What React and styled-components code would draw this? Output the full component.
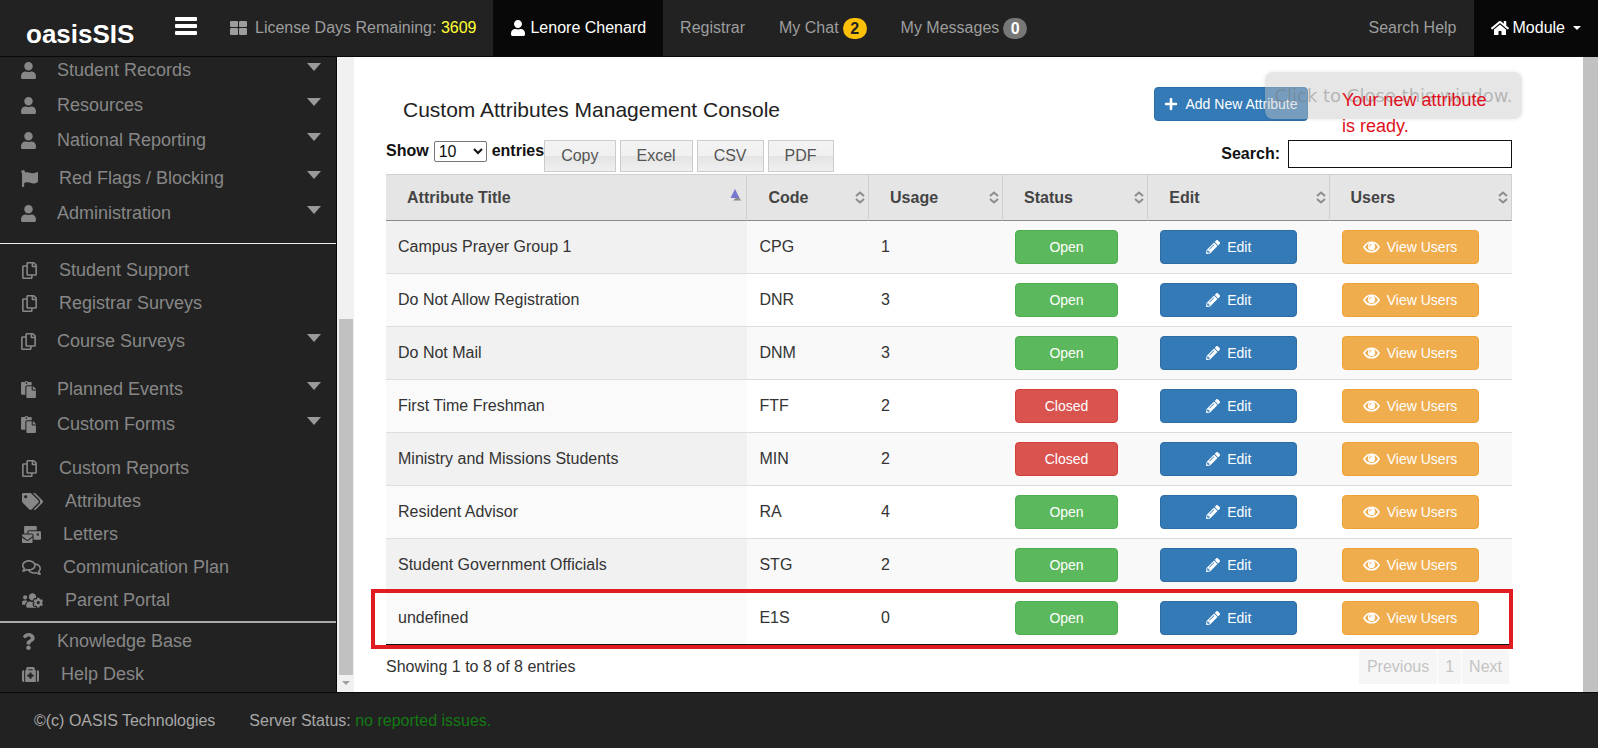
import React, { useState } from "react";
import styled, { createGlobalStyle, css } from "styled-components";
import {
  FaUser,
  FaFlag,
  FaRegCopy,
  FaPaste,
  FaTags,
  FaMailBulk,
  FaRegComments,
  FaUsersCog,
  FaQuestion,
  FaMedkit,
  FaHome,
  FaPlus,
  FaPencilAlt,
} from "react-icons/fa";

// every section is closed by a rule, groups inside it are spaced apart
const menuSections = [
  [
    {
      space: 0,
      items: [
        { label: "Student Records", icon: FaUser, width: 15, open: true },
        { label: "Resources", icon: FaUser, width: 15, open: true },
        { label: "National Reporting", icon: FaUser, width: 15, open: true },
      ],
    },
    {
      space: 3,
      items: [
        { label: "Red Flags / Blocking", icon: FaFlag, width: 17, open: true },
        { label: "Administration", icon: FaUser, width: 15, open: true },
      ],
    },
  ],
  [
    {
      space: 10,
      items: [
        { label: "Student Support", icon: FaRegCopy, width: 15 },
        { label: "Registrar Surveys", icon: FaRegCopy, width: 15 },
      ],
    },
    {
      space: 4,
      items: [{ label: "Course Surveys", icon: FaRegCopy, width: 15, open: true }],
    },
    {
      space: 13,
      items: [
        { label: "Planned Events", icon: FaPaste, width: 15, open: true },
        { label: "Custom Forms", icon: FaPaste, width: 15, open: true },
      ],
    },
    {
      space: 10,
      items: [
        { label: "Custom Reports", icon: FaRegCopy, width: 15 },
        { label: "Attributes", icon: FaTags, width: 21 },
        { label: "Letters", icon: FaMailBulk, width: 19 },
        { label: "Communication Plan", icon: FaRegComments, width: 19 },
        { label: "Parent Portal", icon: FaUsersCog, width: 21 },
      ],
    },
  ],
  [
    {
      space: 2,
      items: [
        { label: "Knowledge Base", icon: FaQuestion, width: 13 },
        { label: "Help Desk", icon: FaMedkit, width: 17 },
      ],
    },
  ],
];

const columns = [
  { title: "Attribute Title", width: "32.1%", sorted: true },
  { title: "Code", width: "10.8%" },
  { title: "Usage", width: "11.9%" },
  { title: "Status", width: "12.9%" },
  { title: "Edit", width: "16.1%" },
  { title: "Users", width: "16.2%" },
];

const attributes = [
  { title: "Campus Prayer Group 1", code: "CPG", usage: 1, status: "Open" },
  { title: "Do Not Allow Registration", code: "DNR", usage: 3, status: "Open" },
  { title: "Do Not Mail", code: "DNM", usage: 3, status: "Open" },
  { title: "First Time Freshman", code: "FTF", usage: 2, status: "Closed" },
  { title: "Ministry and Missions Students", code: "MIN", usage: 2, status: "Closed" },
  { title: "Resident Advisor", code: "RA", usage: 4, status: "Open" },
  { title: "Student Government Officials", code: "STG", usage: 2, status: "Open" },
  { title: "undefined", code: "E1S", usage: 0, status: "Open" },
];

const SortIcon = () => (
  <svg width="10" height="13" viewBox="0 0 10 13" fill="none" stroke="#8c8c8c" strokeWidth="2">
    <path d="M1 5 L5 1.5 L9 5" />
    <path d="M1 8 L5 11.5 L9 8" />
  </svg>
);

const SortedIcon = () => (
  <svg width="11" height="12" viewBox="0 0 11 12">
    <path d="M3 11.5 H11 L8 7 Z" fill="#8a8a8a" />
    <path d="M5 0 L9.5 9 H0.5 Z" fill="#7777cc" />
  </svg>
);

const EyeIcon = () => (
  <svg width="17" height="12" viewBox="0 0 17 12">
    <path
      d="M1 6 C4.5 -0.4 12.5 -0.4 16 6 C12.5 12.4 4.5 12.4 1 6 Z"
      fill="none"
      stroke="#fff"
      strokeWidth="1.6"
    />
    <circle cx="8.5" cy="5.4" r="3.6" fill="#fff" />
    <path d="M6.6 5.4 A1.9 1.9 0 0 1 8.5 3.5" fill="none" stroke="#f0ad4e" strokeWidth="0.9" />
  </svg>
);

const Sidebar = () => (
  <Menu>
    {menuSections.map((groups, index) => (
      <MenuSection key={index} $index={index}>
        {groups.map((group) => (
          <MenuGroup key={group.items[0].label} $space={group.space}>
            {group.items.map(({ label, icon: Icon, width, open }) => (
              <li key={label}>
                {open ? (
                  <MenuToggle type="button">
                    <IconBox $width={width}>
                      <Icon />
                    </IconBox>
                    {label}
                    <Arrow />
                  </MenuToggle>
                ) : (
                  <MenuLink href="#">
                    <IconBox $width={width}>
                      <Icon />
                    </IconBox>
                    {label}
                  </MenuLink>
                )}
              </li>
            ))}
          </MenuGroup>
        ))}
      </MenuSection>
    ))}
  </Menu>
);

const AttributeTable = () => (
  <TableBox>
    <Table>
      <colgroup>
        {columns.map((col) => (
          <Col key={col.title} $width={col.width} />
        ))}
      </colgroup>
      <thead>
        <tr>
          {columns.map((col) => (
            <Th key={col.title}>
              <ThInner $sorted={col.sorted}>
                {col.title}
                {col.sorted ? <SortedIcon /> : <SortIcon />}
              </ThInner>
            </Th>
          ))}
        </tr>
      </thead>
      <tbody>
        {attributes.map((row) => (
          <Row key={row.code}>
            <td>{row.title}</td>
            <td>{row.code}</td>
            <td>{row.usage}</td>
            <td>
              <Button $color={row.status === "Open" ? "green" : "red"} $width="103px">
                {row.status}
              </Button>
            </td>
            <td>
              <Button $color="blue" $width="137px">
                <FaPencilAlt />
                Edit
              </Button>
            </td>
            <td>
              <Button $color="orange" $width="137px">
                <EyeIcon />
                View Users
              </Button>
            </td>
          </Row>
        ))}
      </tbody>
    </Table>
    <Highlight />
  </TableBox>
);

const App = () => {
  const [search, setSearch] = useState("");
  const [size, setSize] = useState("10");

  return (
    <Page>
      <GlobalStyle />
      <Header>
        <Brand href="#">oasisSIS</Brand>
        <Burger type="button" aria-label="Toggle menu">
          <svg width="22" height="18" viewBox="0 0 22 18" fill="#fff">
            <rect width="22" height="4" rx="1" />
            <rect y="7" width="22" height="4" rx="1" />
            <rect y="14" width="22" height="4" rx="1" />
          </svg>
        </Burger>
        <NavItem href="#">
          <svg width="17" height="14" viewBox="0 0 17 14" fill="#9d9d9d">
            <rect width="8" height="6" rx="1" />
            <rect x="9" width="8" height="6" rx="1" />
            <rect y="7" width="8" height="7" rx="1" />
            <rect x="9" y="7" width="8" height="7" rx="1" />
          </svg>
          <License>
            License Days Remaining: <Days>3609</Days>
          </License>
        </NavItem>
        <NavItem href="#" $active>
          <FaUser size={16} />
          Lenore Chenard
        </NavItem>
        <NavItem href="#">Registrar</NavItem>
        <NavItem href="#">
          My Chat <Badge $warning>2</Badge>
        </NavItem>
        <NavItem href="#">
          My Messages <Badge>0</Badge>
        </NavItem>
        <Spacer />
        <NavItem href="#">Search Help</NavItem>
        <NavItem href="#" $active>
          <FaHome size={18} />
          Module
          <Caret />
        </NavItem>
      </Header>

      <Body>
        <Sidebar />
        <ScrollTrack>
          <ScrollThumb />
          <ScrollArrow />
        </ScrollTrack>
        <Main>
          <TitleRow>
            <Title>Custom Attributes Management Console</Title>
            <Button $color="blue" $width="154px">
              <FaPlus />
              Add New Attribute
            </Button>
            <Message>Your new attribute is ready.</Message>
          </TitleRow>
          <CloseHint>Click to Close this window.</CloseHint>

          <Toolbar>
            <LengthLabel>
              Show
              <select value={size} onChange={(e) => setSize(e.target.value)}>
                <option>10</option>
                <option>25</option>
                <option>50</option>
              </select>
              entries
            </LengthLabel>
            <ExportButtons>
              {["Copy", "Excel", "CSV", "PDF"].map((name) => (
                <ExportButton key={name} type="button">
                  {name}
                </ExportButton>
              ))}
            </ExportButtons>
            <Spacer />
            <SearchLabel>
              Search:
              <input type="text" value={search} onChange={(e) => setSearch(e.target.value)} />
            </SearchLabel>
          </Toolbar>

          <AttributeTable />

          <TableFooter>
            <span>Showing 1 to 8 of 8 entries</span>
            <Pager>
              <button type="button">Previous</button>
              <button type="button">1</button>
              <button type="button">Next</button>
            </Pager>
          </TableFooter>
        </Main>
        <PageScroll />
      </Body>

      <Footer>
        <span>©(c) OASIS Technologies</span>
        <span>
          Server Status: <Status>no reported issues.</Status>
        </span>
      </Footer>
    </Page>
  );
};

const GlobalStyle = createGlobalStyle`
  * {
    box-sizing: border-box;
  }
  body {
    margin: 0;
    background: #fff;
    font-family: "Liberation Sans", Arial, sans-serif;
    font-size: 16px;
    color: #333;
  }
  button, input, select {
    font: inherit;
  }
  a {
    text-decoration: none;
  }
`;

const Page = styled.div`
  display: flex;
  flex-direction: column;
  min-height: 100vh;
  padding-right: 2px;
`;

const Spacer = styled.div`
  flex: 1;
`;

/* top bar */
const Header = styled.header`
  display: flex;
  height: 57px;
  background: #222;
  border-bottom: 1px solid #080808;
`;

const Brand = styled.a`
  width: 149px;
  padding: 14px 0 0 26px;
  font-size: 26px;
  font-weight: bold;
  line-height: 40px;
  color: #fff;
`;

const Burger = styled.button`
  display: flex;
  align-items: flex-start;
  width: 64px;
  padding: 17px 0 0 26px;
  border: 0;
  background: none;
`;

const NavItem = styled.a`
  display: flex;
  align-items: center;
  gap: 4px;
  padding: 0 17px;
  color: ${(props) => (props.$active ? "#fff" : "#9d9d9d")};
  background: ${(props) => (props.$active ? "#080808" : "transparent")};
  white-space: nowrap;
`;

const License = styled.span`
  padding-left: 4px;
`;

const Days = styled.span`
  color: #ffff33;
`;

const Badge = styled.span`
  min-width: 24px;
  height: 21px;
  border-radius: 11px;
  font-weight: bold;
  line-height: 21px;
  text-align: center;
  color: ${(props) => (props.$warning ? "#222" : "#fff")};
  background: ${(props) => (props.$warning ? "#ffc107" : "#777")};
`;

const Caret = styled.span`
  margin-left: 4px;
  border: 4px solid transparent;
  border-top-color: #fff;
  border-bottom: 0;
`;

/* side menu */
const Body = styled.div`
  display: flex;
  flex: 1;
`;

const Menu = styled.nav`
  flex: none;
  width: 337px;
  overflow: hidden;
  background: #222;
  border-right: 1px solid #080808;
`;

const MenuSection = styled.div`
  ${(props) =>
    props.$index === 0 &&
    css`
      margin-top: -4px;
      padding-bottom: 12px;
      border-bottom: 1px solid #eee;
    `}
  ${(props) =>
    props.$index === 1 &&
    css`
      padding-bottom: 4px;
      border-bottom: 2px solid #aaa;
    `}
`;

const MenuGroup = styled.ul`
  margin: 0;
  padding: ${(props) => props.$space}px 0 0;
  list-style: none;
`;

const menuItem = css`
  display: flex;
  align-items: center;
  font-size: 18px;
  color: #878787;
`;

const MenuToggle = styled.button`
  ${menuItem}
  gap: 21px;
  width: 100%;
  height: 35px;
  padding: 0 15px 0 21px;
  border: 0;
  background: none;
`;

const MenuLink = styled.a`
  ${menuItem}
  gap: 22px;
  height: 33px;
  padding: 0 15px 0 22px;
`;

const IconBox = styled.span`
  display: flex;
  flex: none;
  width: ${(props) => props.$width}px;

  svg {
    width: 100%;
    height: 17px;
  }
`;

const Arrow = styled.span`
  align-self: flex-start;
  margin: 10px 0 0 auto;
  border: 7px solid transparent;
  border-top: 8px solid #9a9a9a;
  border-bottom: 0;
`;

const ScrollTrack = styled.div`
  display: flex;
  flex-direction: column;
  align-items: center;
  flex: none;
  width: 17px;
  background: #f1f1f1;
`;

const ScrollThumb = styled.div`
  width: 14px;
  height: 56%;
  margin-top: auto;
  background: #c1c1c1;
`;

const ScrollArrow = styled.div`
  margin: 6px 0 7px;
  border: 4px solid transparent;
  border-top-color: #a0a0a0;
  border-bottom: 0;
`;

const PageScroll = styled.div`
  flex: none;
  width: 15px;
  background: #c1c1c1;
`;

/* content */
const Main = styled.main`
  position: relative;
  flex: 1;
  min-width: 0;
  padding: 30px 71px 0 32px;
`;

const TitleRow = styled.div`
  display: flex;
  align-items: flex-start;
  min-height: 53px;
`;

const Title = styled.h1`
  flex: 1;
  margin: 0;
  padding-left: 17px;
  font-size: 21px;
  font-weight: normal;
  line-height: 46px;
  color: #222;
`;

const colors = {
  blue: ["#337ab7", "#2e6da4"],
  green: ["#5cb85c", "#4cae4c"],
  red: ["#d9534f", "#d43f3a"],
  orange: ["#f0ad4e", "#eea236"],
};

const Button = styled.button.attrs({ type: "button" })`
  display: flex;
  align-items: center;
  justify-content: center;
  gap: 7px;
  width: ${(props) => props.$width};
  height: 34px;
  padding: 0;
  border: 1px solid ${(props) => colors[props.$color][1]};
  border-radius: 4px;
  background: ${(props) => colors[props.$color][0]};
  color: #fff;
  font-size: 14px;
  white-space: nowrap;
`;

const Message = styled.p`
  position: relative;
  z-index: 1;
  width: 170px;
  margin: 0 0 0 34px;
  padding-right: 16px;
  font-size: 18px;
  line-height: 26px;
  color: #e01020;
`;

const CloseHint = styled.div`
  position: absolute;
  top: 15px;
  right: 61px;
  width: 257px;
  height: 47px;
  border-radius: 8px;
  background: rgba(200, 200, 200, 0.45);
  box-shadow: 0 0 4px rgba(0, 0, 0, 0.1);
  font-family: "DejaVu Sans", sans-serif;
  font-size: 18px;
  line-height: 47px;
  text-align: center;
  white-space: nowrap;
  color: rgba(120, 120, 120, 0.45);
`;

const Toolbar = styled.div`
  display: flex;
  align-items: flex-start;
  height: 34px;
`;

const LengthLabel = styled.label`
  display: flex;
  align-items: center;
  gap: 5px;
  height: 22px;
  font-weight: bold;
  color: #111;

  select {
    width: 53px;
    height: 21px;
    padding: 0;
    border: 1px solid #767676;
    border-radius: 2px;
    background: #fff;
    color: #111;
    font-weight: normal;
  }
`;

const ExportButtons = styled.div`
  display: flex;
  gap: 4px;
`;

const ExportButton = styled.button`
  height: 32px;
  padding: 0 16px;
  border: 1px solid #ccc;
  background: linear-gradient(#f3f3f3 0%, #f0f0f0 50%, #e4e4e4 51%, #f0f0f0 100%);
  color: #555;
`;

const SearchLabel = styled.label`
  display: flex;
  align-items: center;
  gap: 8px;
  font-weight: bold;
  color: #111;

  input {
    width: 224px;
    height: 28px;
    padding: 4px;
    border: 1px solid #111;
    background: #fff;
    font-weight: normal;
  }
`;

const TableBox = styled.div`
  position: relative;
`;

const Table = styled.table`
  width: 100%;
  table-layout: fixed;
  border-collapse: separate;
  border-spacing: 0;
  border-bottom: 1px solid #111;
`;

const Col = styled.col`
  width: ${(props) => props.$width};
`;

const Th = styled.th`
  height: 47px;
  padding: 0;
  border-top: 1px solid #d0d0d0;
  border-right: 1px solid #d0d0d0;
  border-bottom: 1px solid #8a8a8a;
  background: #e5e5e5;
  color: #444;
`;

const ThInner = styled.div`
  display: flex;
  align-items: center;
  justify-content: space-between;
  padding: 0 ${(props) => (props.$sorted ? 5 : 3)}px 0 21px;

  svg {
    margin-bottom: ${(props) => (props.$sorted ? 6 : 0)}px;
  }
`;

const Row = styled.tr`
  background: #fff;

  td {
    height: 53px;
    padding: 0 12px;
    border-bottom: 1px solid #ddd;
  }
  td:first-child {
    background: #fafafa;
  }
  &:nth-child(odd) {
    background: #f9f9f9;
  }
  &:nth-child(odd) td:first-child {
    background: #f1f1f1;
  }
  &:last-child td {
    height: 52px;
    border-bottom: 0;
  }
`;

// marks the newly added row
const Highlight = styled.div`
  position: absolute;
  left: -15px;
  right: -1px;
  bottom: -4px;
  height: 60px;
  border: 4px solid #e01b22;
  pointer-events: none;
`;

const TableFooter = styled.div`
  display: flex;
  justify-content: space-between;
  align-items: flex-start;
  padding: 5px 3px 8px 0;
  line-height: 34px;
`;

const Pager = styled.div`
  display: flex;
  gap: 1px;

  button {
    height: 34px;
    padding: 0 8px;
    border: 0;
    background: #f6f6f6;
    color: #c4c4c4;
  }
  button:not(:first-child) {
    padding: 0 7px;
  }
`;

/* bottom bar */
const Footer = styled.footer`
  display: flex;
  align-items: center;
  gap: 34px;
  height: 56px;
  padding-left: 34px;
  background: #222;
  border-top: 1px solid #080808;
  color: #a8a8a8;
`;

const Status = styled.span`
  color: #147a14;
`;

export default App;
